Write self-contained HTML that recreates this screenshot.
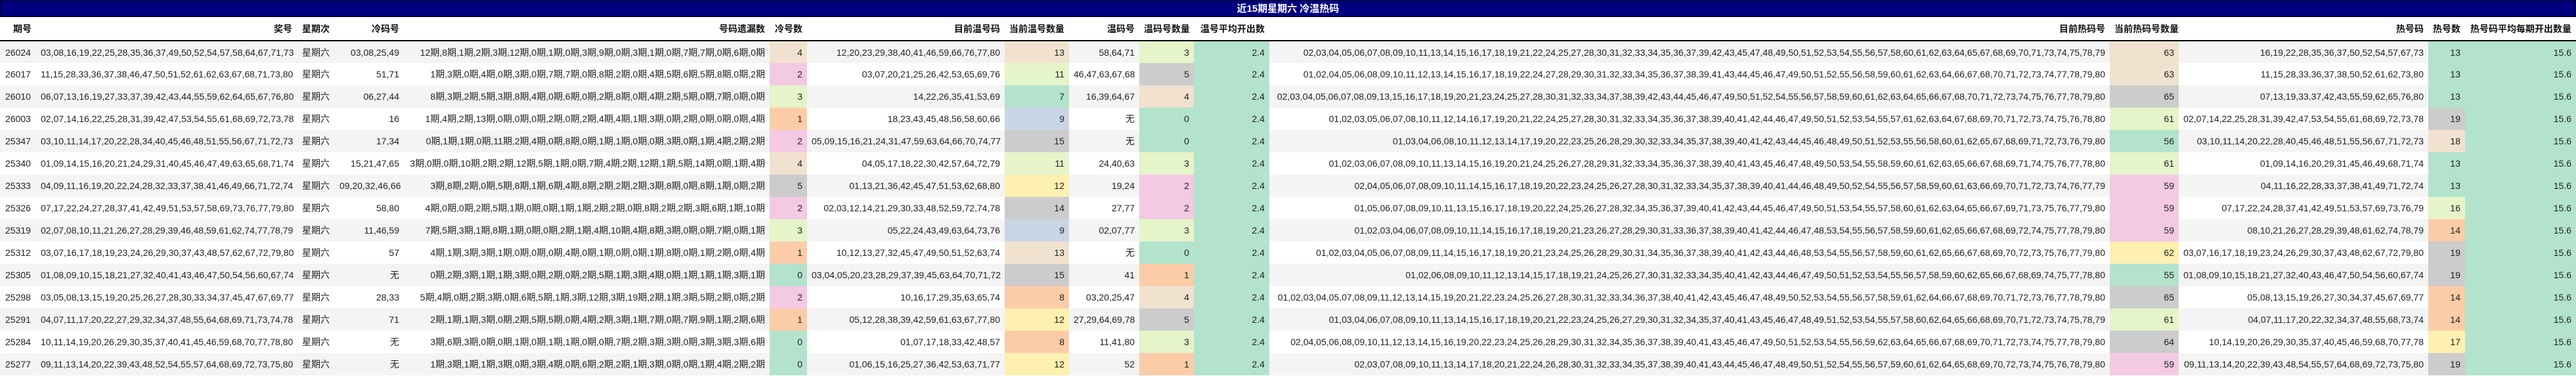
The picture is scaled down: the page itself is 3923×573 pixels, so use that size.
<!DOCTYPE html>
<html><head><meta charset="utf-8"><style>
*{margin:0;padding:0;box-sizing:border-box}
html,body{width:3923px;height:573px;overflow:hidden;background:#fff}
body{font-family:"Liberation Sans","Noto Sans CJK SC",sans-serif;font-size:14px;color:#222}
.title{height:26px;background:#000080;color:#fff;font-weight:bold;text-align:center;line-height:26px;font-size:15px;border:1px solid #000}
table{border-collapse:collapse;table-layout:fixed;width:3923px}
th{height:36px;border-bottom:2px solid #000;font-weight:bold;text-align:right;padding:0 7px;white-space:nowrap;font-size:14px;color:#111}
td{height:34px;text-align:right;padding:0 7px;white-space:nowrap;overflow:hidden}
tr.s td{background:#f4f4f4}
td.L,th.L{text-align:left;padding-left:8px}
tr td.b{background:#f0e2cf}tr td.p{background:#f3c9e4}tr td.l{background:#e5f4c9}tr td.o{background:#fccca8}
tr td.g{background:#cccccc}tr td.n{background:#b3e3cc}tr td.u{background:#cad5e6}tr td.y{background:#fdf0b0}
</style></head><body>
<div class="title">近15期星期六 冷温热码</div>
<table>
<colgroup><col style="width:55px"><col style="width:397px"><col style="width:58px"><col style="width:105px"><col style="width:557px"><col style="width:57px"><col style="width:301px"><col style="width:98px"><col style="width:107px"><col style="width:83px"><col style="width:115px"><col style="width:1280px"><col style="width:105px"><col style="width:380px"><col style="width:56px"><col style="width:169px"></colgroup>
<tr><th class="L" style="padding-left:20px">期号</th><th>奖号</th><th class="L">星期次</th><th>冷码号</th><th>号码遗漏数</th><th>冷号数</th><th>目前温号码</th><th>当前温号数量</th><th>温码号</th><th>温码号数量</th><th>温号平均开出数</th><th>目前热码号</th><th>当前热码号数量</th><th>热号码</th><th>热号数</th><th>热号码平均每期开出数量</th></tr>
<tr class="s"><td class="L">26024</td><td>03,08,16,19,22,25,28,35,36,37,49,50,52,54,57,58,64,67,71,73</td><td class="L">星期六</td><td>03,08,25,49</td><td>12期,8期,1期,2期,3期,12期,0期,1期,0期,3期,9期,0期,3期,1期,0期,7期,7期,0期,6期,0期</td><td class="b">4</td><td>12,20,23,29,38,40,41,46,59,66,76,77,80</td><td class="b">13</td><td>58,64,71</td><td class="l">3</td><td class="n">2.4</td><td>02,03,04,05,06,07,08,09,10,11,13,14,15,16,17,18,19,21,22,24,25,27,28,30,31,32,33,34,35,36,37,39,42,43,45,47,48,49,50,51,52,53,54,55,56,57,58,60,61,62,63,64,65,67,68,69,70,71,73,74,75,78,79</td><td class="b">63</td><td>16,19,22,28,35,36,37,50,52,54,57,67,73</td><td class="n">13</td><td class="n">15.6</td></tr>
<tr><td class="L">26017</td><td>11,15,28,33,36,37,38,46,47,50,51,52,61,62,63,67,68,71,73,80</td><td class="L">星期六</td><td>51,71</td><td>1期,3期,0期,4期,0期,3期,0期,7期,7期,0期,8期,2期,0期,4期,5期,6期,5期,8期,0期,2期</td><td class="p">2</td><td>03,07,20,21,25,26,42,53,65,69,76</td><td class="l">11</td><td>46,47,63,67,68</td><td class="g">5</td><td class="n">2.4</td><td>01,02,04,05,06,08,09,10,11,12,13,14,15,16,17,18,19,22,24,27,28,29,30,31,32,33,34,35,36,37,38,39,41,43,44,45,46,47,49,50,51,52,55,56,58,59,60,61,62,63,64,66,67,68,70,71,72,73,74,77,78,79,80</td><td class="b">63</td><td>11,15,28,33,36,37,38,50,52,61,62,73,80</td><td class="n">13</td><td class="n">15.6</td></tr>
<tr class="s"><td class="L">26010</td><td>06,07,13,16,19,27,33,37,39,42,43,44,55,59,62,64,65,67,76,80</td><td class="L">星期六</td><td>06,27,44</td><td>8期,3期,2期,5期,3期,8期,4期,0期,6期,0期,2期,8期,0期,4期,2期,5期,0期,7期,0期,0期</td><td class="l">3</td><td>14,22,26,35,41,53,69</td><td class="n">7</td><td>16,39,64,67</td><td class="b">4</td><td class="n">2.4</td><td>02,03,04,05,06,07,08,09,13,15,16,17,18,19,20,21,23,24,25,27,28,30,31,32,33,34,37,38,39,42,43,44,45,46,47,49,50,51,52,54,55,56,57,58,59,60,61,62,63,64,65,66,67,68,70,71,72,73,74,75,76,77,78,79,80</td><td class="g">65</td><td>07,13,19,33,37,42,43,55,59,62,65,76,80</td><td class="n">13</td><td class="n">15.6</td></tr>
<tr><td class="L">26003</td><td>02,07,14,16,22,25,28,31,39,42,47,53,54,55,61,68,69,72,73,78</td><td class="L">星期六</td><td>16</td><td>1期,4期,2期,13期,0期,0期,0期,2期,0期,2期,4期,4期,1期,3期,0期,2期,0期,0期,0期,4期</td><td class="o">1</td><td>18,23,43,45,48,56,58,60,66</td><td class="u">9</td><td>无</td><td class="n">0</td><td class="n">2.4</td><td>01,02,03,05,06,07,08,10,11,12,14,16,17,19,20,21,22,24,25,27,28,30,31,32,33,34,35,36,37,38,39,40,41,42,44,46,47,49,50,51,52,53,54,55,57,61,62,63,64,67,68,69,70,71,72,73,74,75,76,78,80</td><td class="l">61</td><td>02,07,14,22,25,28,31,39,42,47,53,54,55,61,68,69,72,73,78</td><td class="g">19</td><td class="n">15.6</td></tr>
<tr class="s"><td class="L">25347</td><td>03,10,11,14,17,20,22,28,34,40,45,46,48,51,55,56,67,71,72,73</td><td class="L">星期六</td><td>17,34</td><td>0期,1期,1期,0期,11期,2期,4期,0期,8期,0期,1期,1期,0期,0期,3期,0期,1期,4期,2期,2期</td><td class="p">2</td><td>05,09,15,16,21,24,31,47,59,63,64,66,70,74,77</td><td class="g">15</td><td>无</td><td class="n">0</td><td class="n">2.4</td><td>01,03,04,06,08,10,11,12,13,14,17,19,20,22,23,25,26,28,29,30,32,33,34,35,37,38,39,40,41,42,43,44,45,46,48,49,50,51,52,53,55,56,58,60,61,62,65,67,68,69,71,72,73,76,79,80</td><td class="n">56</td><td>03,10,11,14,20,22,28,40,45,46,48,51,55,56,67,71,72,73</td><td class="b">18</td><td class="n">15.6</td></tr>
<tr><td class="L">25340</td><td>01,09,14,15,16,20,21,24,29,31,40,45,46,47,49,63,65,68,71,74</td><td class="L">星期六</td><td>15,21,47,65</td><td>3期,0期,0期,10期,2期,2期,12期,5期,1期,0期,7期,4期,2期,12期,1期,5期,14期,0期,1期,4期</td><td class="b">4</td><td>04,05,17,18,22,30,42,57,64,72,79</td><td class="l">11</td><td>24,40,63</td><td class="l">3</td><td class="n">2.4</td><td>01,02,03,06,07,08,09,10,11,13,14,15,16,19,20,21,24,25,26,27,28,29,31,32,33,34,35,36,37,38,39,40,41,43,45,46,47,48,49,50,53,54,55,58,59,60,61,62,63,65,66,67,68,69,71,74,75,76,77,78,80</td><td class="l">61</td><td>01,09,14,16,20,29,31,45,46,49,68,71,74</td><td class="n">13</td><td class="n">15.6</td></tr>
<tr class="s"><td class="L">25333</td><td>04,09,11,16,19,20,22,24,28,32,33,37,38,41,46,49,66,71,72,74</td><td class="L">星期六</td><td>09,20,32,46,66</td><td>3期,8期,2期,0期,5期,8期,1期,6期,4期,8期,2期,2期,2期,3期,8期,0期,8期,1期,0期,2期</td><td class="g">5</td><td>01,13,21,36,42,45,47,51,53,62,68,80</td><td class="y">12</td><td>19,24</td><td class="p">2</td><td class="n">2.4</td><td>02,04,05,06,07,08,09,10,11,14,15,16,17,18,19,20,22,23,24,25,26,27,28,30,31,32,33,34,35,37,38,39,40,41,44,46,48,49,50,52,54,55,56,57,58,59,60,61,63,66,69,70,71,72,73,74,76,77,79</td><td class="p">59</td><td>04,11,16,22,28,33,37,38,41,49,71,72,74</td><td class="n">13</td><td class="n">15.6</td></tr>
<tr><td class="L">25326</td><td>07,17,22,24,27,28,37,41,42,49,51,53,57,58,69,73,76,77,79,80</td><td class="L">星期六</td><td>58,80</td><td>4期,0期,0期,2期,5期,1期,0期,0期,1期,1期,2期,2期,0期,8期,2期,2期,3期,6期,1期,10期</td><td class="p">2</td><td>02,03,12,14,21,29,30,33,48,52,59,72,74,78</td><td class="g">14</td><td>27,77</td><td class="p">2</td><td class="n">2.4</td><td>01,05,06,07,08,09,10,11,13,15,16,17,18,19,20,22,24,25,26,27,28,32,34,35,36,37,39,40,41,42,43,44,45,46,47,49,50,51,53,54,55,57,58,60,61,62,63,64,65,66,67,69,71,73,75,76,77,79,80</td><td class="p">59</td><td>07,17,22,24,28,37,41,42,49,51,53,57,69,73,76,79</td><td class="l">16</td><td class="n">15.6</td></tr>
<tr class="s"><td class="L">25319</td><td>02,07,08,10,11,21,26,27,28,29,39,46,48,59,61,62,74,77,78,79</td><td class="L">星期六</td><td>11,46,59</td><td>7期,5期,3期,1期,8期,1期,0期,0期,2期,1期,4期,10期,4期,8期,3期,0期,0期,7期,0期,1期</td><td class="l">3</td><td>05,22,24,43,49,63,64,73,76</td><td class="u">9</td><td>02,07,77</td><td class="l">3</td><td class="n">2.4</td><td>01,02,03,04,06,07,08,09,10,11,14,15,16,17,18,19,20,21,23,26,27,28,29,30,31,33,36,37,38,39,40,41,42,44,46,47,48,53,54,55,56,57,58,59,60,61,62,65,66,67,68,69,72,74,75,77,78,79,80</td><td class="p">59</td><td>08,10,21,26,27,28,29,39,48,61,62,74,78,79</td><td class="o">14</td><td class="n">15.6</td></tr>
<tr><td class="L">25312</td><td>03,07,16,17,18,19,23,24,26,29,30,37,43,48,57,62,67,72,79,80</td><td class="L">星期六</td><td>57</td><td>4期,1期,3期,3期,1期,0期,0期,0期,4期,0期,1期,0期,0期,1期,8期,0期,1期,2期,0期,4期</td><td class="o">1</td><td>10,12,13,27,32,45,47,49,50,51,52,63,74</td><td class="b">13</td><td>无</td><td class="n">0</td><td class="n">2.4</td><td>01,02,03,04,05,06,07,08,09,11,14,15,16,17,18,19,20,21,23,24,25,26,28,29,30,31,34,35,36,37,38,39,40,41,42,43,44,46,48,53,54,55,56,57,58,59,60,61,62,65,66,67,68,69,70,72,73,75,76,77,79,80</td><td class="y">62</td><td>03,07,16,17,18,19,23,24,26,29,30,37,43,48,62,67,72,79,80</td><td class="g">19</td><td class="n">15.6</td></tr>
<tr class="s"><td class="L">25305</td><td>01,08,09,10,15,18,21,27,32,40,41,43,46,47,50,54,56,60,67,74</td><td class="L">星期六</td><td>无</td><td>0期,2期,3期,1期,1期,3期,0期,2期,0期,2期,5期,1期,3期,4期,0期,1期,1期,1期,3期,1期</td><td class="n">0</td><td>03,04,05,20,23,28,29,37,39,45,63,64,70,71,72</td><td class="g">15</td><td>41</td><td class="o">1</td><td class="n">2.4</td><td>01,02,06,08,09,10,11,12,13,14,15,17,18,19,21,24,25,26,27,30,31,32,33,34,35,40,41,42,43,44,46,47,49,50,51,52,53,54,55,56,57,58,59,60,62,65,66,67,68,69,74,75,77,78,80</td><td class="n">55</td><td>01,08,09,10,15,18,21,27,32,40,43,46,47,50,54,56,60,67,74</td><td class="g">19</td><td class="n">15.6</td></tr>
<tr><td class="L">25298</td><td>03,05,08,13,15,19,20,25,26,27,28,30,33,34,37,45,47,67,69,77</td><td class="L">星期六</td><td>28,33</td><td>5期,4期,0期,2期,3期,0期,6期,5期,1期,3期,12期,3期,19期,2期,1期,3期,5期,2期,0期,2期</td><td class="p">2</td><td>10,16,17,29,35,63,65,74</td><td class="o">8</td><td>03,20,25,47</td><td class="b">4</td><td class="n">2.4</td><td>01,02,03,04,05,07,08,09,11,12,13,14,15,19,20,21,22,23,24,25,26,27,28,30,31,32,33,34,36,37,38,40,41,42,43,45,46,47,48,49,50,52,53,54,55,56,57,58,59,61,62,64,66,67,68,69,70,71,72,73,76,77,78,79,80</td><td class="g">65</td><td>05,08,13,15,19,26,27,30,34,37,45,67,69,77</td><td class="o">14</td><td class="n">15.6</td></tr>
<tr class="s"><td class="L">25291</td><td>04,07,11,17,20,22,27,29,32,34,37,48,55,64,68,69,71,73,74,78</td><td class="L">星期六</td><td>71</td><td>2期,1期,1期,3期,0期,2期,5期,5期,0期,4期,2期,3期,1期,7期,0期,7期,9期,1期,2期,6期</td><td class="o">1</td><td>05,12,28,38,39,42,59,61,63,67,77,80</td><td class="y">12</td><td>27,29,64,69,78</td><td class="g">5</td><td class="n">2.4</td><td>01,03,04,06,07,08,09,10,11,13,14,15,16,17,18,19,20,21,22,23,24,25,26,27,29,30,31,32,34,35,37,40,41,43,45,46,47,48,49,51,52,53,54,55,57,58,60,62,64,65,66,68,69,70,71,72,73,74,75,78,79</td><td class="l">61</td><td>04,07,11,17,20,22,32,34,37,48,55,68,73,74</td><td class="o">14</td><td class="n">15.6</td></tr>
<tr><td class="L">25284</td><td>10,11,14,19,20,26,29,30,35,37,40,41,45,46,59,68,70,77,78,80</td><td class="L">星期六</td><td>无</td><td>3期,6期,3期,0期,0期,1期,0期,1期,1期,0期,0期,7期,2期,3期,3期,0期,3期,3期,3期,6期</td><td class="n">0</td><td>01,07,17,18,33,42,48,57</td><td class="o">8</td><td>11,41,80</td><td class="l">3</td><td class="n">2.4</td><td>02,04,05,06,08,09,10,11,12,13,14,15,16,19,20,22,23,24,25,26,28,29,30,31,32,34,35,36,37,38,39,40,41,43,45,46,47,49,50,51,52,53,54,55,56,59,62,63,64,65,66,67,68,69,70,71,72,73,74,75,77,78,79,80</td><td class="g">64</td><td>10,14,19,20,26,29,30,35,37,40,45,46,59,68,70,77,78</td><td class="y">17</td><td class="n">15.6</td></tr>
<tr class="s"><td class="L">25277</td><td>09,11,13,14,20,22,39,43,48,52,54,55,57,64,68,69,72,73,75,80</td><td class="L">星期六</td><td>无</td><td>1期,3期,1期,1期,3期,0期,3期,4期,0期,6期,2期,2期,1期,3期,0期,0期,1期,4期,2期,2期</td><td class="n">0</td><td>01,06,15,16,25,27,36,42,53,63,71,77</td><td class="y">12</td><td>52</td><td class="o">1</td><td class="n">2.4</td><td>02,03,07,08,09,10,11,13,14,17,18,20,21,22,24,26,28,30,31,32,33,34,35,37,38,39,40,41,43,44,45,46,47,48,49,50,51,52,54,55,56,57,59,60,61,62,64,65,68,69,70,72,73,74,75,76,78,79,80</td><td class="p">59</td><td>09,11,13,14,20,22,39,43,48,54,55,57,64,68,69,72,73,75,80</td><td class="g">19</td><td class="n">15.6</td></tr>
</table>
</body></html>
